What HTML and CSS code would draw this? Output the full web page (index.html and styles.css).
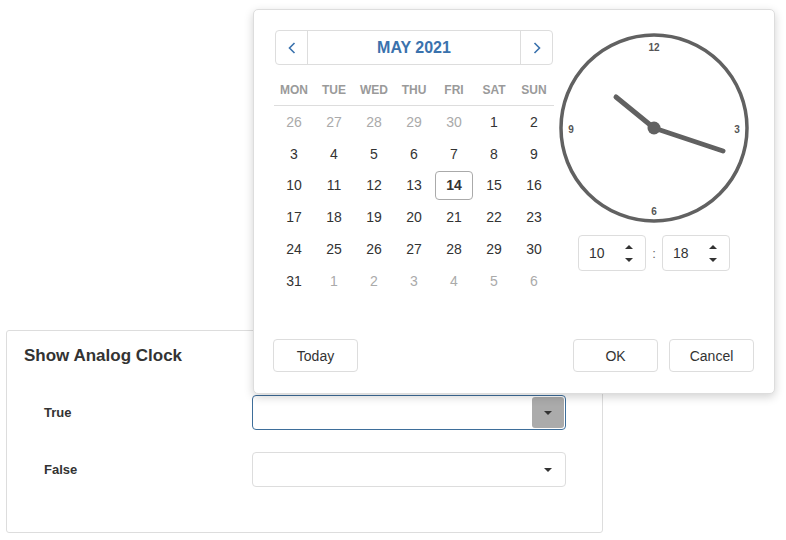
FILE: index.html
```html
<!DOCTYPE html>
<html lang="en">
<head>
    <meta charset="UTF-8" />
    <title>Show Analog Clock</title>
    <link rel="stylesheet" href="styles.css">
</head>
<body>

    <div class="panel">
        <h2>Show Analog Clock</h2>
        <div class="row">
            <label>True</label>
            <div class="dropdown active">
                <span class="dd-btn"><span class="caret"></span></span>
            </div>
        </div>
        <div class="row">
            <label>False</label>
            <div class="dropdown">
                <span class="dd-btn"><span class="caret"></span></span>
            </div>
        </div>
    </div>

    <div class="popup">
        <div class="popup-body">
            <div class="calendar">
                <div class="cal-header">
                    <span class="nav prev">
                        <svg width="8" height="12" viewBox="0 0 8 12"><path d="M6.5 1 L1.5 6 L6.5 11" fill="none" stroke="#3a72ad" stroke-width="1.6"/></svg>
                    </span>
                    <span class="title">MAY 2021</span>
                    <span class="nav next">
                        <svg width="8" height="12" viewBox="0 0 8 12"><path d="M1.5 1 L6.5 6 L1.5 11" fill="none" stroke="#3a72ad" stroke-width="1.6"/></svg>
                    </span>
                </div>
                <div class="weekdays">
                    <span>MON</span><span>TUE</span><span>WED</span><span>THU</span><span>FRI</span><span>SAT</span><span>SUN</span>
                </div>
                <div class="days">
                    <span class="muted">26</span><span class="muted">27</span><span class="muted">28</span><span class="muted">29</span><span class="muted">30</span><span>1</span><span>2</span>
                    <span>3</span><span>4</span><span>5</span><span>6</span><span>7</span><span>8</span><span>9</span>
                    <span>10</span><span>11</span><span>12</span><span>13</span><span class="today">14</span><span>15</span><span>16</span>
                    <span>17</span><span>18</span><span>19</span><span>20</span><span>21</span><span>22</span><span>23</span>
                    <span>24</span><span>25</span><span>26</span><span>27</span><span>28</span><span>29</span><span>30</span>
                    <span>31</span><span class="muted">1</span><span class="muted">2</span><span class="muted">3</span><span class="muted">4</span><span class="muted">5</span><span class="muted">6</span>
                </div>
            </div>

            <div class="clock">
                <svg width="200" height="200" viewBox="0 0 200 200">
                    <circle cx="100" cy="98" r="93" fill="#fff" stroke="#616161" stroke-width="3.5"/>
                    <text x="100" y="21" class="num">12</text>
                    <text x="183" y="103" class="num">3</text>
                    <text x="100" y="185" class="num">6</text>
                    <text x="17" y="103" class="num">9</text>
                    <line x1="100" y1="98" x2="62" y2="67" stroke="#616161" stroke-width="5" stroke-linecap="round"/>
                    <line x1="100" y1="98" x2="169" y2="121" stroke="#616161" stroke-width="5" stroke-linecap="round"/>
                    <circle cx="100" cy="98" r="6.5" fill="#616161"/>
                </svg>
                <div class="time">
                    <div class="spin">
                        <span class="val">10</span>
                        <span class="arrows"><span class="up"></span><span class="down"></span></span>
                    </div>
                    <span class="colon">:</span>
                    <div class="spin">
                        <span class="val">18</span>
                        <span class="arrows"><span class="up"></span><span class="down"></span></span>
                    </div>
                </div>
            </div>
        </div>

        <div class="footer">
            <button class="btn">Today</button>
            <span class="spacer"></span>
            <button class="btn">OK</button>
            <button class="btn">Cancel</button>
        </div>
    </div>

</body>
</html>
```

FILE: styles.css
```css
body {
    font-family: "Liberation Sans", Arial, sans-serif;
    margin: 0;
    background: #fff;
    color: #333;
}

/* panel under the picker */
.panel {
    margin: 330px 0 0 6px;
    width: 597px;
    height: 203px;
    box-sizing: border-box;
    border: 1px solid #ddd;
    border-radius: 3px;
    padding: 13px 17px;
}
.panel h2 {
    margin: 0;
    font-size: 17px;
    line-height: 24px;
    font-weight: bold;
    color: #333;
}
.row {
    display: flex;
    align-items: center;
    padding-left: 20px;
    margin-top: 22px;
}
.panel h2 + .row {
    margin-top: 27px;
}
.row label {
    width: 208px;
    font-size: 13px;
    font-weight: bold;
}
.dropdown {
    width: 314px;
    height: 35px;
    box-sizing: border-box;
    border: 1px solid #ddd;
    border-radius: 4px;
    display: flex;
    justify-content: flex-end;
    align-items: center;
    padding: 1px;
}
.dropdown.active {
    border-color: #3e6e9a;
}
.dd-btn {
    width: 32px;
    height: 31px;
    border-radius: 3px;
    display: flex;
    align-items: center;
    justify-content: center;
}
.dropdown.active .dd-btn {
    background: #ababab;
}
.caret {
    width: 0;
    height: 0;
    border-left: 4px solid transparent;
    border-right: 4px solid transparent;
    border-top: 4px solid #333;
}

/* date time picker */
.popup {
    position: absolute;
    left: 253px;
    top: 9px;
    width: 522px;
    height: 385px;
    box-sizing: border-box;
    background: #fff;
    border: 1px solid #ddd;
    border-radius: 5px;
    box-shadow: 0 3px 10px rgba(0,0,0,0.18);
    padding: 20px 20px 21px 20px;
    display: flex;
    flex-direction: column;
}
.popup-body {
    display: flex;
}
.calendar {
    width: 280px;
}
.cal-header {
    margin: 0 1px;
    height: 35px;
    box-sizing: border-box;
    border: 1px solid #ddd;
    border-radius: 4px;
    display: flex;
    align-items: center;
}
.nav {
    width: 31px;
    height: 100%;
    display: flex;
    align-items: center;
    justify-content: center;
}
.prev {
    border-right: 1px solid #ddd;
}
.next {
    border-left: 1px solid #ddd;
}
.title {
    flex: 1;
    text-align: center;
    font-size: 16px;
    font-weight: bold;
    color: #3a72ad;
}
.weekdays {
    display: grid;
    grid-template-columns: repeat(7, 40px);
    margin-top: 10px;
    height: 30px;
    border-bottom: 1px solid #ddd;
    align-items: center;
    text-align: center;
    font-size: 12px;
    font-weight: bold;
    color: #9a9a9a;
}
.days {
    display: grid;
    grid-template-columns: repeat(7, 40px);
    grid-auto-rows: 31.8px;
    text-align: center;
    font-size: 14px;
}
.days span {
    display: flex;
    align-items: center;
    justify-content: center;
}
.days .muted {
    color: #aaa;
}
.days .today {
    margin: 1px;
    border: 1px solid #aaa;
    border-radius: 4px;
    font-weight: bold;
}
.clock {
    width: 200px;
    display: flex;
    flex-direction: column;
    align-items: center;
}
.clock svg {
    display: block;
}
.num {
    font-family: "Liberation Sans", Arial, sans-serif;
    font-size: 10px;
    font-weight: bold;
    fill: #555;
    text-anchor: middle;
}
.time {
    display: flex;
    align-items: center;
    margin-top: 5px;
}
.spin {
    width: 68px;
    height: 36px;
    box-sizing: border-box;
    border: 1px solid #ddd;
    border-radius: 4px;
    display: flex;
    align-items: center;
    padding-left: 10px;
    font-size: 14px;
}
.spin .val {
    flex: 1;
}
.arrows {
    width: 32px;
    display: flex;
    flex-direction: column;
    align-items: center;
    gap: 9px;
}
.up, .down {
    width: 0;
    height: 0;
    border-left: 4px solid transparent;
    border-right: 4px solid transparent;
}
.up {
    border-bottom: 4px solid #333;
}
.down {
    border-top: 4px solid #333;
}
.colon {
    width: 16px;
    text-align: center;
    font-size: 13px;
    color: #666;
}
.footer {
    margin-top: auto;
    display: flex;
    gap: 11px;
    margin-left: -1px;
}
.spacer {
    flex: 1;
}
.btn {
    width: 85px;
    height: 33px;
    background: #fff;
    border: 1px solid #ddd;
    border-radius: 4px;
    font-family: "Liberation Sans", Arial, sans-serif;
    font-size: 14px;
    color: #333;
}
```
